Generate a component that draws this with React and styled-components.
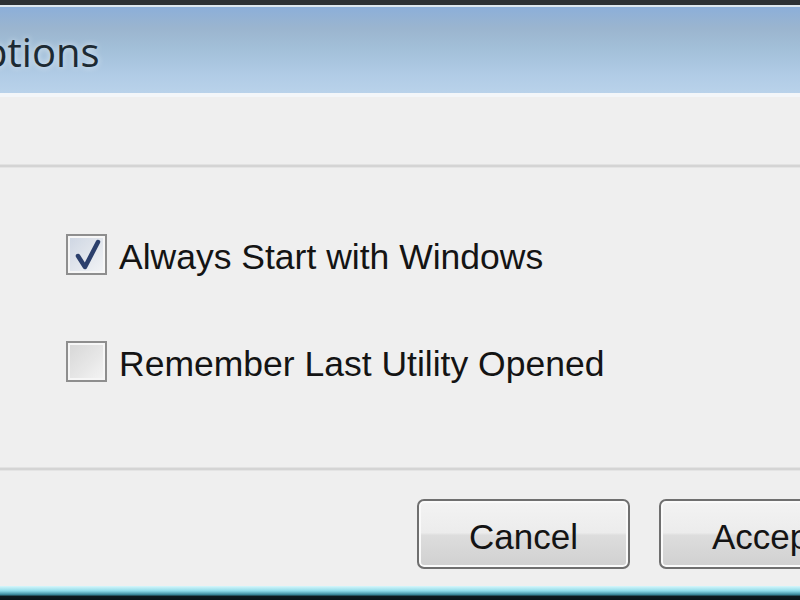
import React, { useState } from "react";
import styled, { createGlobalStyle } from "styled-components";

const GlobalStyle = createGlobalStyle`
  html, body {
    margin: 0;
    padding: 0;
    background: #efefef;
  }
`;

const Frame = styled.div`
  width: 800px;
  height: 600px;
  overflow: hidden;
  display: flex;
  flex-direction: column;
  background: #efefef;
  font-family: "Liberation Sans", Arial, sans-serif;
  color: #141414;
`;

const TopEdge = styled.div`
  height: 5px;
  flex: none;
  background: #2c3134;
`;

const TitleBar = styled.div`
  height: 86px;
  flex: none;
  display: flex;
  align-items: center;
  overflow: hidden;
  border-top: 2px solid #dde7ee;
  border-bottom: 4px solid #f3f6f9;
  background: linear-gradient(
    to bottom,
    #8cafd9 0%,
    #9bb5cf 25%,
    #a3c0d9 50%,
    #b1cce6 80%,
    #b9d2ea 100%
  );
`;

const Title = styled.span`
  margin-left: -48px;
  margin-top: 2px;
  font-family: "Open Sans", "Noto Sans", sans-serif;
  font-size: 40px;
  color: #1d2a33;
  text-shadow: 0 0 6px rgba(255, 255, 255, 0.7);
`;

const Spacer = styled.div`
  height: ${(p) => p.$h}px;
  flex: none;
`;

const Separator = styled.div`
  height: 2px;
  flex: none;
  background: #d4d4d4;
  box-shadow: 0 -1px 0 #e2e2e2, 0 1px 0 #e4e4e4;
`;

const Options = styled.div`
  display: flex;
  flex-direction: column;
  gap: 66px;
  padding: 67px 0 86px 66px;
`;

const OptionRow = styled.label`
  display: flex;
  align-items: center;
  gap: 12px;
  height: 41px;
  font-size: 35.5px;
  cursor: default;
`;

const Label = styled.span`
  padding-top: 6px;
`;

const Box = styled.span`
  width: 37px;
  height: 37px;
  flex: none;
  border: 2px solid #8e8e8e;
  box-shadow: inset 0 0 0 2px #f6f6f6;
  background: ${(p) =>
    p.$checked
      ? "linear-gradient(135deg, #cdd5e2 0%, #e4e8ee 60%, #f3f4f6 100%)"
      : "linear-gradient(135deg, #d6d6d6 0%, #e6e6e6 55%, #f5f5f5 100%)"};
  display: flex;
  align-items: center;
  justify-content: center;
`;

const ButtonRow = styled.div`
  display: flex;
  gap: 29px;
  padding: 29px 0 0 417px;
`;

const Button = styled.button`
  width: 213px;
  height: 70px;
  flex: none;
  border: 2px solid #6f6f6f;
  border-radius: 7px;
  box-shadow: inset 0 0 0 2px #fafafa;
  background: linear-gradient(
    to bottom,
    #f3f3f3 0%,
    #ececec 48%,
    #dddddd 52%,
    #d0d0d0 100%
  );
  font-family: "Liberation Sans", Arial, sans-serif;
  font-size: 35px;
  color: #141414;
  padding: 6px 0 0 0;
`;

const BottomEdge = styled.div`
  margin-top: auto;
  height: 14px;
  flex: none;
  background: linear-gradient(
    to bottom,
    #d6f6fb 0%,
    #8edbe9 35%,
    #3f8fa2 60%,
    #0d1a1f 75%,
    #0a1418 100%
  );
`;

const Check = () => (
  <svg width="37" height="37" viewBox="0 0 37 37">
    <path
      d="M10 20 L17 31 L30 6"
      fill="none"
      stroke="#2b3f6c"
      strokeWidth="4.5"
      strokeLinecap="round"
      strokeLinejoin="round"
    />
  </svg>
);

const Option = ({ checked, onToggle, children }) => (
  <OptionRow onClick={onToggle}>
    <Box $checked={checked}>{checked && <Check />}</Box>
    <Label>{children}</Label>
  </OptionRow>
);

export default function App() {
  const [startWithWindows, setStartWithWindows] = useState(true);
  const [rememberLast, setRememberLast] = useState(false);

  return (
    <>
      <GlobalStyle />
      <Frame>
        <TopEdge />
        <TitleBar>
          <Title>Options</Title>
        </TitleBar>
        <Spacer $h={68} />
        <Separator />
        <Options>
          <Option
            checked={startWithWindows}
            onToggle={() => setStartWithWindows(!startWithWindows)}
          >
            Always Start with Windows
          </Option>
          <Option
            checked={rememberLast}
            onToggle={() => setRememberLast(!rememberLast)}
          >
            Remember Last Utility Opened
          </Option>
        </Options>
        <Separator />
        <ButtonRow>
          <Button>Cancel</Button>
          <Button>Accept</Button>
        </ButtonRow>
        <BottomEdge />
      </Frame>
    </>
  );
}
